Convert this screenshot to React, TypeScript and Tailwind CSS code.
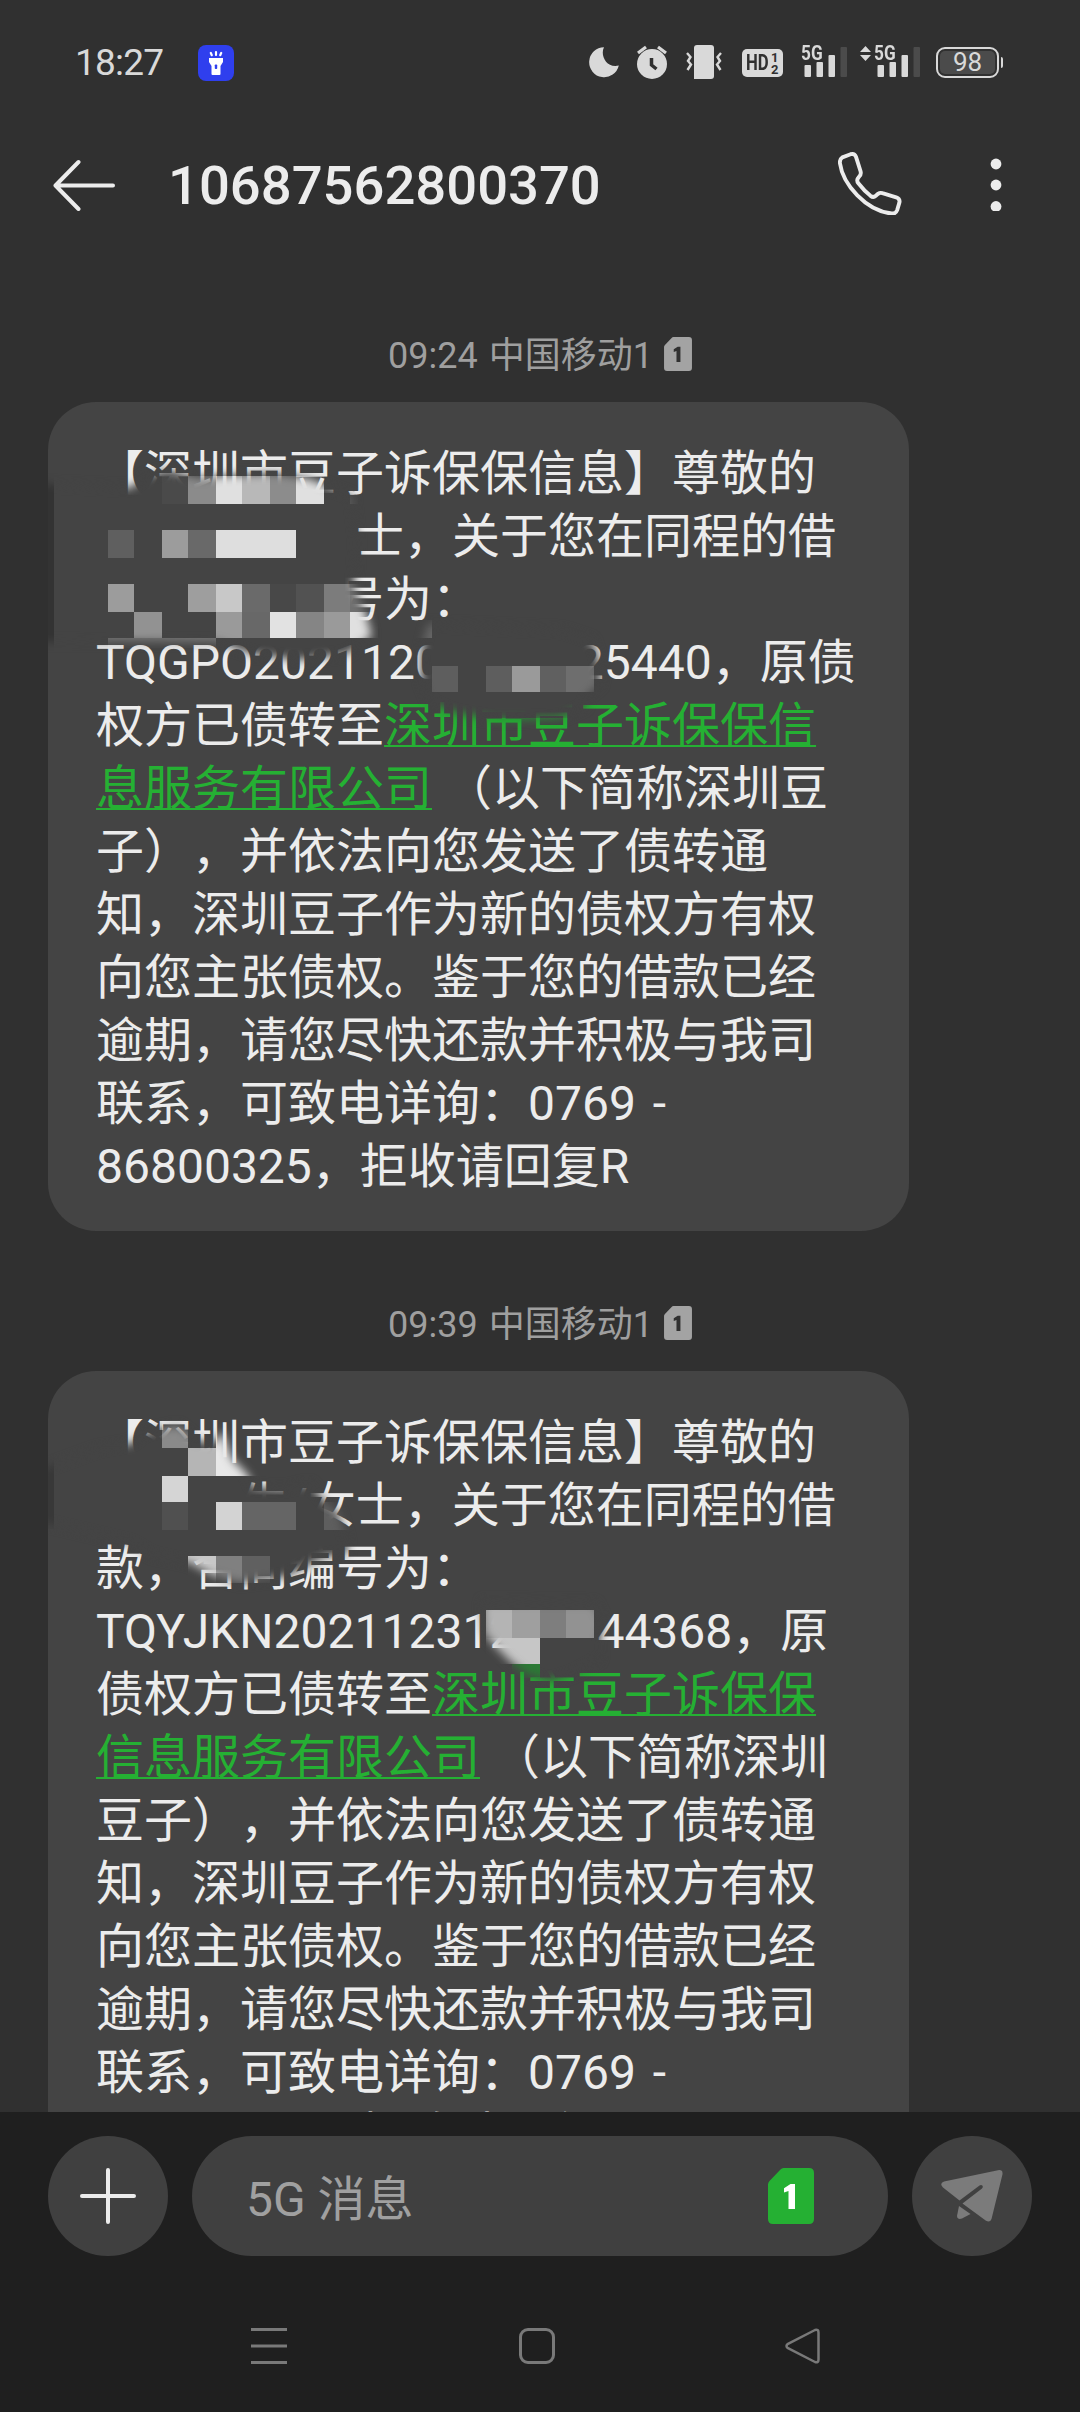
import type { ReactNode } from 'react';

type Cell = [x: number, y: number, width: number, height: number, fill: string];

interface MosaicPatch {
  brush: string;
  cells: Cell[];
}

interface MessageProps {
  carrier: string;
  children: ReactNode;
  id: string;
  patches: MosaicPatch[];
  time: string;
}

// Coordinates are relative to the top left corner of the bubble.
const firstPatches: MosaicPatch[] = [
  {
    brush:
      'M-10 82 L82 86 L98 74 L120 68 L150 76 L172 74 L225 71 L262 77 L288 88 L304 94 L309 140 L306 186 L316 206 L324 234 L298 252 L250 258 L205 252 L170 240 L70 239 L-10 240 Z',
    cells: [
      [-4, 70, 10, 180, '#333333'],
      [114, 74, 26, 28, '#4a4a4a'],
      [140, 74, 28, 28, '#8b8b8b'],
      [168, 74, 26, 28, '#e0e0e0'],
      [194, 74, 28, 28, '#b8b8b8'],
      [222, 74, 26, 28, '#8c8c8c'],
      [248, 74, 28, 28, '#e0e0e0'],
      [302, 74, 8, 28, '#5a5a5a'],
      [60, 128, 26, 28, '#5f5f5f'],
      [114, 128, 26, 28, '#9c9c9c'],
      [140, 128, 28, 28, '#696969'],
      [168, 128, 80, 28, '#dedede'],
      [60, 182, 26, 28, '#9c9c9c'],
      [140, 182, 28, 28, '#9e9e9e'],
      [168, 182, 26, 28, '#c8c8c8'],
      [194, 182, 28, 28, '#6a6a6a'],
      [222, 182, 26, 28, '#484848'],
      [248, 182, 28, 28, '#525252'],
      [276, 182, 26, 28, '#7c7c7c'],
      [302, 182, 28, 28, '#707070'],
      [86, 210, 28, 26, '#929292'],
      [168, 210, 26, 26, '#9a9a9a'],
      [194, 210, 28, 26, '#686868'],
      [222, 210, 26, 26, '#e2e2e2'],
      [248, 210, 28, 26, '#858585'],
      [276, 210, 26, 26, '#9a9a9a'],
      [302, 210, 28, 26, '#e0e0e0'],
      [60, 236, 108, 10, '#777777'],
    ],
  },
  {
    brush:
      'M374 246 L380 222 L514 228 L544 238 L550 256 L553 282 L538 294 L538 304 L512 316 L452 318 L407 311 L382 300 L373 278 Z',
    cells: [
      [366, 218, 18, 18, '#666666'],
      [384, 264, 26, 26, '#5e5e5e'],
      [438, 264, 26, 26, '#5e5e5e'],
      [464, 264, 28, 26, '#9a9a9a'],
      [492, 264, 26, 26, '#606060'],
      [518, 264, 28, 26, '#6e6e6e'],
      [438, 316, 82, 10, '#2b8a37'],
    ],
  },
];

const secondPatches: MosaicPatch[] = [
  {
    brush:
      'M-10 100 L50 78 L84 72 L96 62 L130 54 L150 70 L166 72 L174 60 L184 88 L200 104 L204 116 L236 118 L262 112 L276 130 L290 140 L298 166 L300 182 L276 186 L260 194 L236 206 L192 212 L164 204 L142 192 L104 184 L84 172 L-10 150 Z',
    cells: [
      [0, 78, 6, 80, '#383838'],
      [114, 49, 26, 28, '#8a8a8a'],
      [140, 77, 28, 28, '#b5b5b5'],
      [168, 49, 26, 56, '#e8e8e8'],
      [194, 77, 20, 28, '#e8e8e8'],
      [114, 105, 26, 26, '#d5d5d5'],
      [114, 131, 26, 28, '#505050'],
      [168, 131, 26, 28, '#d3d3d3'],
      [194, 131, 54, 28, '#656565'],
      [276, 131, 26, 28, '#5e5e5e'],
      [140, 185, 28, 27, '#c8c8c8'],
      [168, 185, 26, 27, '#808080'],
      [194, 185, 28, 27, '#606060'],
    ],
  },
  {
    brush:
      'M434 230 L547 232 L555 250 L552 268 L552 288 L526 302 L502 310 L478 303 L462 290 L448 276 L436 262 Z',
    cells: [
      [438, 239, 26, 28, '#b4b4b4'],
      [464, 239, 28, 28, '#9f9f9f'],
      [492, 239, 26, 28, '#7e7e7e'],
      [518, 239, 28, 28, '#929292'],
      [438, 267, 54, 26, '#c6c6c6'],
      [464, 293, 28, 14, '#2b7a35'],
    ],
  },
];

export default function App() {
  return (
    <main className="flex h-[2412px] w-[1080px] flex-col overflow-hidden bg-[#303030] font-[Roboto,'Noto_Sans_CJK_SC',sans-serif] text-[#ececec] [text-spacing-trim:space-all]">
      <StatusBar />
      <ConversationHeader />
      <section aria-label="Messages" className="flex min-h-0 flex-1 flex-col overflow-hidden pt-[78px]">
        <Message carrier="中国移动1" id="first" patches={firstPatches} time="09:24">
          <Line>【深圳市豆子诉保保信息】尊敬的</Line>
          <Line>
            <Gap className="w-[260px]" />
            士，关于您在同程的借
          </Line>
          <Line>
            <Gap className="w-[240px]" />
            号为：
          </Line>
          <Line>
            TQGPO2021120
            <Gap className="w-[135px]" />
            25440，原债
          </Line>
          <Line>
            权方已债转至<Company>深圳市豆子诉保保信</Company>
          </Line>
          <Line>
            <Company>息服务有限公司</Company> （以下简称深圳豆
          </Line>
          <Line>子），并依法向您发送了债转通</Line>
          <MessageTail />
        </Message>
        <Message carrier="中国移动1" id="second" patches={secondPatches} time="09:39">
          <Line>【深圳市豆子诉保保信息】尊敬的</Line>
          <Line>
            <Gap className="w-[144px]" />
            生/女士，关于您在同程的借
          </Line>
          <Line>款，合同编号为：</Line>
          <Line>
            TQYJKN202112312
            <Gap className="w-[81px]" />
            44368，原
          </Line>
          <Line>
            债权方已债转至<Company>深圳市豆子诉保保</Company>
          </Line>
          <Line>
            <Company>信息服务有限公司</Company> （以下简称深圳
          </Line>
          <Line>豆子），并依法向您发送了债转通</Line>
          <MessageTail />
        </Message>
      </section>
      <Composer />
      <NavigationBar />
    </main>
  );
}

function Message({ carrier, children, id, patches, time }: MessageProps) {
  return (
    <article className="flex shrink-0 flex-col">
      <div className="flex h-[84px] items-start justify-center text-[36px] leading-[42px] text-[#9f9f9f]">
        <span className="mt-[17px] mr-[11px]">{time}</span>
        <span className="mt-[17px] mr-[11px]">{carrier}</span>
        <SimIcon className="mt-[19px] h-[34px] w-[28px] text-[#a3a3a3]" digit="#303030" />
      </div>
      <div className="relative mb-[56px] ml-[48px] h-[829px] w-[861px] rounded-[48px] bg-[#444444] px-[48px] pt-[40px] text-[48px] leading-[63px]">
        {children}
        <Mosaic id={id} patches={patches} />
      </div>
    </article>
  );
}

function MessageTail() {
  return (
    <>
      <Line>知，深圳豆子作为新的债权方有权</Line>
      <Line>向您主张债权。鉴于您的借款已经</Line>
      <Line>逾期，请您尽快还款并积极与我司</Line>
      <Line>
        联系，可致电详询：0769 <span className="ml-[5px]">-</span>
      </Line>
      <Line>86800325，拒收请回复R</Line>
    </>
  );
}

function Line({ children }: { children: ReactNode }) {
  return <p className="h-[63px] whitespace-nowrap">{children}</p>;
}

function Gap({ className }: { className: string }) {
  return <span className={`inline-block ${className}`} />;
}

function Company({ children }: { children: ReactNode }) {
  return (
    <span className="text-[#25b033] underline decoration-[2px] underline-offset-[3px] [text-decoration-skip-ink:none]">
      {children}
    </span>
  );
}

function Mosaic({ id, patches }: { id: string; patches: MosaicPatch[] }) {
  return (
    <svg
      aria-hidden="true"
      className="pointer-events-none absolute top-0 left-0 h-[340px] w-[861px]"
      viewBox="0 0 861 340"
    >
      {patches.map((patch, index) => (
        <g key={index}>
          <filter height="140%" id={`${id}-soft-${index}`} width="140%" x="-20%" y="-20%">
            <feGaussianBlur stdDeviation="5" />
          </filter>
          <mask height="340" id={`${id}-brush-${index}`} maskUnits="userSpaceOnUse" width="861" x="0" y="0">
            <path d={patch.brush} fill="#fff" filter={`url(#${id}-soft-${index})`} />
          </mask>
          <g mask={`url(#${id}-brush-${index})`} shapeRendering="crispEdges">
            <rect fill="#444444" height="340" width="861" />
            {patch.cells.map(([x, y, width, height, fill]) => (
              <rect fill={fill} height={height} key={`${x}-${y}`} width={width} x={x} y={y} />
            ))}
          </g>
        </g>
      ))}
    </svg>
  );
}

function StatusBar() {
  return (
    <header className="flex h-[125px] shrink-0 items-start pl-[75px] text-[#d9d9d9]">
      <span className="mt-[41px] w-[123px] text-[37px] leading-[44px] tracking-[-0.8px]">18:27</span>
      <svg className="mt-[45px] h-[36px] w-[36px]" viewBox="0 0 36 36">
        <rect fill="#2f3fee" height="36" rx="8" width="36" />
        <path d="M11 13h14v4l-2.500 4v8q0 1-1 1h-7q-1 0-1-1v-8L11 17z" fill="#fff" />
        <rect fill="#2f3fee" height="4.500" rx=".8" width="2.400" x="16.800" y="19.500" />
        <path d="M18 7v3M12.800 8l1 2.200M23.200 8l-1 2.200" stroke="#fff" strokeLinecap="round" strokeWidth="2.200" />
      </svg>
      <svg className="mt-[45px] ml-[355px] h-[36px] w-[31px]" fill="currentColor" viewBox="0 0 31 36">
        <path d="M15 2.200C11 9.500 17 23.500 29.800 20.500A15 15 0 1 1 15 2.200z" />
      </svg>
      <svg className="mt-[45px] ml-[16px] h-[36px] w-[32px]" viewBox="0 0 32 36">
        <circle cx="16" cy="19" fill="currentColor" r="15" />
        <path d="M2 8l8-6M30 8l-8-6" stroke="currentColor" strokeWidth="3.200" />
        <path d="M15.500 13v7l5 4" fill="none" stroke="#303030" strokeWidth="3.500" />
      </svg>
      <svg className="mt-[45px] ml-[18px] h-[36px] w-[36px]" viewBox="0 0 36 36">
        <path d="M8 3q0-3 3-3h14q3 0 3 3v28q0 3-3 3H8z" fill="currentColor" />
        <path
          d="M1 8l3.500 4L2 16l3 3.500L1.500 25M35 8l-3.500 4 2.500 4-3 3.500 3.500 5.500"
          fill="none"
          stroke="currentColor"
          strokeWidth="2.400"
        />
      </svg>
      <span className="mt-[49px] ml-[20px] flex h-[28px] w-[41px] rounded-[5px] bg-[#d9d9d9] pl-[4px] font-bold text-[#303030]">
        <span className="w-[24px] origin-left scale-x-[.76] text-[22px] leading-[28px]">HD</span>
        <span className="flex flex-col pt-[3px] pl-[1px] text-[13px] leading-[12px]">
          <span>1</span>
          <span>2</span>
        </span>
      </span>
      <Signal className="ml-[18px]" />
      <svg className="mt-[46px] ml-[12px] h-[15px] w-[11px]" fill="currentColor" viewBox="0 0 11 15">
        <path d="M0 6l5.500-6L11 6zM0 9h11l-5.500 6z" />
      </svg>
      <Signal className="ml-[3px]" />
      <span className="mt-[47px] ml-[15px] flex h-[31px] w-[63px] items-center justify-center rounded-[9px] border-2 border-[#d9d9d9] p-[2px]">
        <span className="flex h-[23px] w-full items-center justify-center rounded-[5px] bg-[#4b4b4b] text-[26px] leading-[23px]">
          98
        </span>
      </span>
      <span className="mt-[57px] ml-[2px] h-[11px] w-[2px] rounded-r bg-[#d9d9d9]" />
    </header>
  );
}

function Signal({ className }: { className: string }) {
  return (
    <span className={`relative mt-[45px] h-[34px] w-[47px] ${className}`}>
      <span className="absolute top-[-1px] left-0 origin-left scale-x-[.82] text-[21px] leading-[19px] font-bold">5G</span>
      <svg className="h-[34px] w-[47px]" viewBox="0 0 47 34">
        <g fill="currentColor">
          <rect height="12" rx="1" width="6.500" x="3.500" y="20" />
          <rect height="15" rx="1" width="6.500" x="15.500" y="17" />
          <rect height="22" rx="1" width="6.500" x="27.500" y="10" />
        </g>
        <rect fill="#4b4b4b" height="30" rx="1" width="6.500" x="39.500" y="2" />
      </svg>
    </span>
  );
}

function ConversationHeader() {
  return (
    <header className="flex h-[115px] shrink-0 items-center pl-[52px]">
      <svg
        className="h-[56px] w-[64px]"
        fill="none"
        stroke="currentColor"
        strokeLinecap="round"
        strokeLinejoin="round"
        strokeWidth="4"
        viewBox="0 0 64 56"
      >
        <path d="M61 30.500H4M26.500 7L3.500 30.500l23 23.500" />
      </svg>
      <h1 className="mt-[6px] ml-[52px] w-[670px] text-[54.4px] leading-[64px] font-medium">10687562800370</h1>
      <svg
        className="h-[65px] w-[64px]"
        fill="none"
        preserveAspectRatio="none"
        stroke="currentColor"
        strokeLinejoin="round"
        strokeWidth="4"
        viewBox="0 0 66 66"
      >
        <path d="M4.500 7.500L13 4.300q4-1.200 5.500 2.500l4.800 15q.8 3-1.300 5l-1.500 2q-1.500 2.500.5 5Q27 41.500 33.500 46.500q3 2.200 5.500 0l2.300-2q2-1.500 4.500-.7L60 48q4.300 1.600 3.300 5.500L61 61q-1.500 4-5.500 3.500C29 62 5 35 2 13.500q-.5-4 2.500-6z" />
      </svg>
      <svg className="ml-[88px] h-[56px] w-[12px]" fill="currentColor" viewBox="0 0 12 56">
        <circle cx="6" cy="9" r="5.400" />
        <circle cx="6" cy="30" r="5.400" />
        <circle cx="6" cy="51.500" r="5.400" />
      </svg>
    </header>
  );
}

function SimIcon({ className, digit }: { className: string; digit: string }) {
  return (
    <svg className={className} viewBox="0 0 46 56">
      <path
        d="M15.500 0H41q5 0 5 5v46q0 5-5 5H5q-5 0-5-5V16.500q0-2 1.500-3.500l11-11.500Q13.800 0 15.500 0z"
        fill="currentColor"
      />
      <path d="M20.500 41V23l-4.500 1.500v-4.300L22.500 16H27v25z" fill={digit} />
    </svg>
  );
}

function Composer() {
  return (
    <footer className="flex h-[176px] shrink-0 gap-6 bg-[#1f1f1f] px-[48px] pt-[24px]">
      <button aria-label="Add" className="flex h-[120px] w-[120px] items-center justify-center rounded-full bg-[#404040]">
        <svg className="h-[58px] w-[58px]" stroke="currentColor" strokeLinecap="round" strokeWidth="4" viewBox="0 0 58 58">
          <path d="M29 3v52M3 29h52" />
        </svg>
      </button>
      <div className="flex h-[120px] w-[696px] items-center justify-between rounded-full bg-[#404040] pr-[74px] pl-[54px]">
        <span className="pt-[7px] text-[48px] leading-[60px] text-[#a0a0a0]">5G 消息</span>
        <SimIcon className="h-[56px] w-[46px] text-[#25b033]" digit="#ffffff" />
      </div>
      <button aria-label="Send" className="flex h-[120px] w-[120px] items-center justify-center rounded-full bg-[#404040]">
        <svg className="h-[54px] w-[62px]" fill="#7b7b7b" viewBox="0 0 62 54">
          <path d="M57 1.200q5-.7 4.500 4L50.500 50q-1.500 4-5.500 1.800L21.500 34.500 41 19.500q1.500-1.600.3-3-1.200-1-2.800 0L18.500 31.500 2 18.500q-4-4 1-6z" />
          <path d="M18 37l11.500 8-8.500 4.500q-4.500 1.500-5-2.500z" />
        </svg>
      </button>
    </footer>
  );
}

function NavigationBar() {
  return (
    <nav className="flex h-[124px] shrink-0 items-start bg-[#1f1f1f] pt-[40px] pl-[251px]">
      <svg className="h-[36px] w-[36px]" stroke="#797979" strokeWidth="3" viewBox="0 0 36 36">
        <path d="M0 1.500h36M0 18h36M0 34.500h36" />
      </svg>
      <span className="ml-[232px] h-[36px] w-[36px] rounded-[9px] border-[3px] border-[#797979]" />
      <svg
        className="ml-[230px] h-[36px] w-[36px]"
        fill="none"
        stroke="#797979"
        strokeLinejoin="round"
        strokeWidth="2.500"
        viewBox="0 0 36 36"
      >
        <path d="M2.500 16.200L30 2q3.500-1 3.500 2.500v27q0 3.500-3.500 2.500L2.500 19.800q-2-1.800 0-3.600z" />
      </svg>
    </nav>
  );
}
